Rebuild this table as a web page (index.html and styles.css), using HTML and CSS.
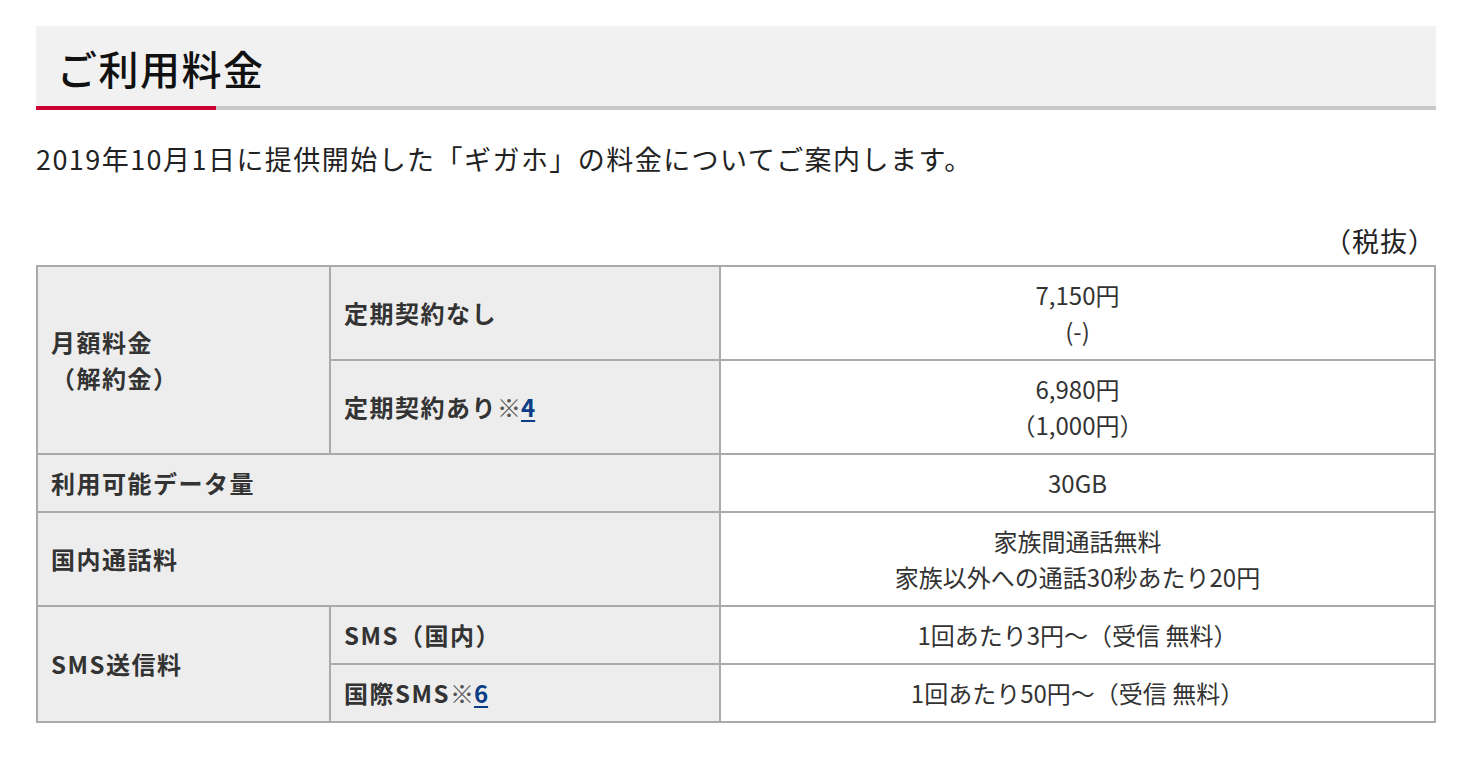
FILE: index.html
```html
<!DOCTYPE html>
<html lang="ja">
<head>
<meta charset="utf-8">
<title>ご利用料金</title>
<link rel="stylesheet" href="styles.css">
</head>
<body>
<main class="page">
  <h2 class="section-title">ご利用料金</h2>
  <p class="lead">2019年10月1日に提供開始した「ギガホ」の料金についてご案内します。</p>
  <p class="tax-note">（税抜）</p>
  <table class="price-table">
    <colgroup>
      <col class="c1">
      <col class="c2">
      <col class="c3">
    </colgroup>
    <tbody>
      <tr>
        <th rowspan="2">月額料金<br>（解約金）</th>
        <th>定期契約なし</th>
        <td>7,150円<br>(-)</td>
      </tr>
      <tr>
        <th>定期契約あり<span class="note">※</span><a class="ref" href="#">4</a></th>
        <td>6,980円<br>（1,000円）</td>
      </tr>
      <tr>
        <th colspan="2">利用可能データ量</th>
        <td>30GB</td>
      </tr>
      <tr>
        <th colspan="2">国内通話料</th>
        <td>家族間通話無料<br>家族以外への通話30秒あたり20円</td>
      </tr>
      <tr>
        <th rowspan="2">SMS送信料</th>
        <th>SMS（国内）</th>
        <td>1回あたり3円〜（受信 無料）</td>
      </tr>
      <tr>
        <th>国際SMS<span class="note">※</span><a class="ref" href="#">6</a></th>
        <td>1回あたり50円〜（受信 無料）</td>
      </tr>
    </tbody>
  </table>
</main>
</body>
</html>
```
FILE: styles.css
```css
html, body {
  margin: 0;
  padding: 0;
  background: #fff;
}

body {
  font-family: "Noto Sans CJK JP", "Noto Sans", sans-serif;
  color: #222;
}

.page {
  padding: 26px 24px 40px 36px;
}

.section-title {
  margin: 0;
  height: 80px;
  padding: 0 0 4px 21px;
  line-height: 84px;
  font-size: 40px;
  font-weight: 500;
  letter-spacing: 1.5px;
  color: #111;
  background:
    linear-gradient(#cc0033, #cc0033) left bottom / 180px 4px no-repeat,
    linear-gradient(#c9c9c9, #c9c9c9) left bottom / 100% 4px no-repeat,
    #f1f1f1;
}

.lead {
  margin: 29px 0 0;
  font-size: 27px;
  line-height: 40px;
  letter-spacing: 1.45px;
  color: #222;
}

.tax-note {
  margin: 43px 0 0;
  text-align: right;
  font-size: 27px;
  line-height: 38px;
  letter-spacing: 1px;
  color: #222;
}

.price-table {
  margin-top: 5px;
  width: 1400px;
  table-layout: fixed;
  border-collapse: separate;
  border-spacing: 0;
  border-top: 2px solid #aaa;
  border-left: 2px solid #aaa;
  font-size: 24px;
  line-height: 36px;
  color: #333;
}

.c1 { width: 293px; }
.c2 { width: 390px; }
.c3 { width: 715px; }

.price-table th,
.price-table td {
  border-right: 2px solid #aaa;
  border-bottom: 2px solid #aaa;
  padding: 10px 13px;
  vertical-align: middle;
}

.price-table th {
  background: #ededed;
  text-align: left;
  font-weight: 700;
  letter-spacing: 1.5px;
}

.price-table td {
  background: #fff;
  text-align: center;
  font-weight: 400;
}

.note {
  font-weight: 400;
  color: #555;
  letter-spacing: 0;
}

.ref {
  color: #0a3d85;
  text-decoration: underline;
  text-underline-offset: 3px;
  letter-spacing: 0;
}
```
